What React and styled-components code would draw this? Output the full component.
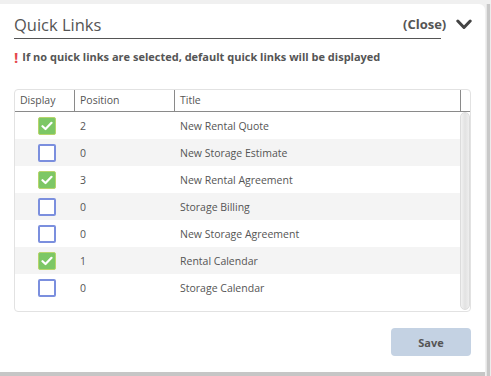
import React from "react";
import styled, { createGlobalStyle } from "styled-components";

const GlobalStyle = createGlobalStyle`
  body {
    margin: 0;
    background: #f0f0f0;
    font-family: "Open Sans", "DejaVu Sans", sans-serif;
    color: #555;
  }
`;

const Screen = styled.div`
  display: flex;
  width: 491px;
  height: 376px;
  padding-top: 4px;
  box-sizing: border-box;
  overflow: hidden;
`;

const Panel = styled.div`
  width: 485px;
  height: 368px;
  flex: 0 0 485px;
  background: #fff;
  border-top-right-radius: 6px;
  box-shadow: 0 4px 0 #c6c6c6;
  padding: 8px 0 0 14px;
  box-sizing: border-box;
`;

const Gutter = styled.div`
  flex: 1;
  border-left: 1px solid #e6e6e6;
  box-shadow: inset 3px 0 0 #c8c8c8;
  margin-left: 1px;
  background: #ececec;
`;

const HeaderRow = styled.div`
  display: flex;
  align-items: flex-end;
`;

const TitleBar = styled.div`
  flex: 0 0 427px;
  border-bottom: 1px solid #555;
  font-size: 16.5px;
  font-weight: 400;
  line-height: 26px;
  color: #555;
`;

const CloseGroup = styled.button`
  display: flex;
  align-items: center;
  gap: 10px;
  margin-left: -38px;
  margin-bottom: 6px;
  padding: 0;
  border: none;
  background: none;
  font-family: inherit;
  font-size: 13px;
  font-weight: 700;
  color: #555;
`;

const Warning = styled.div`
  display: flex;
  align-items: center;
  gap: 4px;
  margin-top: 10px;
  font-size: 11px;
  font-weight: 700;
  color: #555;
`;

const Bang = styled.span`
  color: #e5484d;
  font-size: 15px;
  font-weight: 700;
  line-height: 12px;
`;

const Table = styled.div`
  margin-top: 25px;
  width: 457px;
  height: 223px;
  box-sizing: border-box;
  border: 1px solid #e2e2e2;
  border-radius: 4px;
  display: flex;
  flex-direction: column;
  overflow: hidden;
`;

const HeadRow = styled.div`
  display: grid;
  grid-template-columns: 60px 100px 286px 1fr;
  height: 22px;
  border-bottom: 1px solid #8a8a8a;
  box-sizing: border-box;
`;

const HeadCell = styled.div`
  font-size: 10.5px;
  line-height: 21px;
  padding-left: 5px;
  border-right: ${(p) => (p.$last ? "none" : "1px solid #8a8a8a")};
  color: #555;
`;

const Body = styled.div`
  flex: 1;
  display: flex;
`;

const Rows = styled.div`
  flex: 0 0 445px;
`;

const Row = styled.div`
  display: grid;
  grid-template-columns: 60px 100px 1fr;
  height: 27px;
  align-items: center;
  background: ${(p) => (p.$striped ? "#f4f4f4" : "#fff")};
  font-size: 10.5px;
  color: #555;
`;

const CheckCell = styled.div`
  display: flex;
  padding-left: 23px;
`;

const Box = styled.div`
  width: 18px;
  height: 18px;
  box-sizing: border-box;
  border-radius: 2px;
  display: flex;
  align-items: center;
  justify-content: center;
  background: ${(p) => (p.$on ? "#7dc765" : "#fff")};
  border: ${(p) => (p.$on ? "1px solid #b7d56b" : "2px solid #7b8fde")};
`;

const Cell = styled.div`
  padding-left: 5px;
`;

const Track = styled.div`
  flex: 0 0 10px;
  padding: 0 1px 1px 0;
  display: flex;
`;

const Thumb = styled.div`
  flex: 1;
  border: 1px solid #dcdcdc;
  border-radius: 5px;
  background: linear-gradient(to right, #f2f2f2, #e2e2e2 50%, #eeeeee);
`;

const Footer = styled.div`
  display: flex;
  justify-content: flex-end;
  width: 457px;
  margin-top: 16px;
`;

const SaveButton = styled.button`
  width: 80px;
  height: 28px;
  border: none;
  border-radius: 4px;
  background: #c4d2e3;
  font-family: inherit;
  font-size: 11px;
  font-weight: 700;
  color: #555;
`;

const links = [
  { on: true, pos: 2, title: "New Rental Quote" },
  { on: false, pos: 0, title: "New Storage Estimate" },
  { on: true, pos: 3, title: "New Rental Agreement" },
  { on: false, pos: 0, title: "Storage Billing" },
  { on: false, pos: 0, title: "New Storage Agreement" },
  { on: true, pos: 1, title: "Rental Calendar" },
  { on: false, pos: 0, title: "Storage Calendar" },
];

const Check = () => (
  <svg width="12" height="10" viewBox="0 0 12 10">
    <path d="M1.5 5.2 L4.5 8 L10.5 1.8" fill="none" stroke="#fff" strokeWidth="2.2" strokeLinecap="round" strokeLinejoin="round" />
  </svg>
);

const Chevron = () => (
  <svg width="16" height="11" viewBox="0 0 16 11">
    <path d="M1.8 2 L8 8.5 L14.2 2" fill="none" stroke="#444" strokeWidth="3" strokeLinecap="round" strokeLinejoin="round" />
  </svg>
);

export default function App() {
  return (
    <>
      <GlobalStyle />
      <Screen>
        <Panel>
          <HeaderRow>
            <TitleBar>Quick Links</TitleBar>
            <CloseGroup>
              (Close)
              <Chevron />
            </CloseGroup>
          </HeaderRow>
          <Warning>
            <Bang>!</Bang>
            If no quick links are selected, default quick links will be displayed
          </Warning>
          <Table>
            <HeadRow>
              <HeadCell>Display</HeadCell>
              <HeadCell>Position</HeadCell>
              <HeadCell>Title</HeadCell>
              <HeadCell $last />
            </HeadRow>
            <Body>
              <Rows>
                {links.map((l, i) => (
                  <Row key={l.title} $striped={i % 2 === 1}>
                    <CheckCell>
                      <Box $on={l.on}>{l.on && <Check />}</Box>
                    </CheckCell>
                    <Cell>{l.pos}</Cell>
                    <Cell>{l.title}</Cell>
                  </Row>
                ))}
              </Rows>
              <Track>
                <Thumb />
              </Track>
            </Body>
          </Table>
          <Footer>
            <SaveButton>Save</SaveButton>
          </Footer>
        </Panel>
        <Gutter />
      </Screen>
    </>
  );
}
